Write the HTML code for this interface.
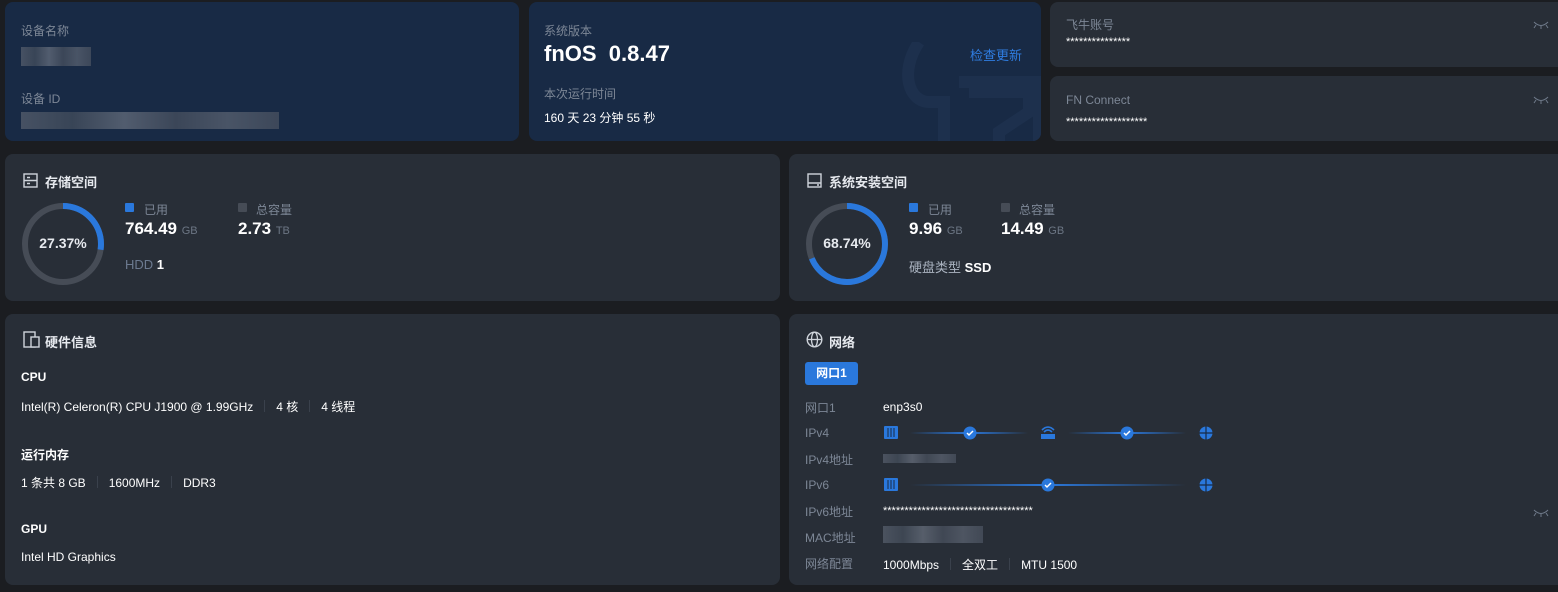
<!DOCTYPE html>
<html><head><meta charset="utf-8"><style>
*{margin:0;padding:0;box-sizing:border-box}
body{width:1558px;height:592px;background:#1b1d21;font-family:"Liberation Sans","Noto Sans CJK SC",sans-serif;color:#fff;position:relative;overflow:hidden}
.c{position:absolute;background:#282e37;border-radius:8px}
.b{background:#182a45}
.a{position:absolute;white-space:nowrap}
.lab{color:#7d8796;font-size:12px}
.v{font-size:12px;color:#fff}
.h{font-size:13px;font-weight:bold;color:#e6e9ee}
.big{font-size:17px;font-weight:bold}
.u{font-size:11px;color:#6c7684;font-weight:normal}
.sep{display:inline-block;width:1px;height:12px;background:#3a414c;margin:0 11px;vertical-align:-1px}
.blur{position:absolute;background:linear-gradient(90deg,#5a6270,#46505e,#6a7280,#4a5260,#5e6674,#4c5462);opacity:.7}
</style></head><body>
<div class="c b" style="left:5px;top:2px;width:514px;height:139px"></div>
<div class="a lab" style="left:21px;top:22px">设备名称</div>
<div class="blur" style="left:21px;top:47px;width:70px;height:19px"></div>
<div class="a lab" style="left:21px;top:90px">设备 ID</div>
<div class="blur" style="left:21px;top:112px;width:258px;height:17px"></div>

<div class="c b" style="left:529px;top:2px;width:512px;height:139px;overflow:hidden">
<svg style="position:absolute;left:370px;top:40px" width="150" height="110"><path d="M20 0 C0 30 10 60 30 60 L45 60 L45 100 M60 40 L140 40 L140 110 M70 50 L130 50 L130 70 L100 90 L100 110" stroke="#1d304d" stroke-width="12" fill="none"/></svg>
</div>
<div class="a lab" style="left:544px;top:22px">系统版本</div>
<div class="a" style="left:544px;top:41px;font-size:22px;font-weight:bold">fnOS&nbsp; 0.8.47</div>
<div class="a" style="left:970px;top:45px;font-size:13px;color:#2f7de1">检查更新</div>
<div class="a lab" style="left:544px;top:85px">本次运行时间</div>
<div class="a v" style="left:544px;top:109px">160 天 23 分钟 55 秒</div>

<div class="c" style="left:1050px;top:2px;width:520px;height:65px"></div>
<div class="a lab" style="left:1066px;top:16px">飞牛账号</div>
<div class="a v" style="left:1066px;top:36px;font-size:11px">***************</div>
<div class="c" style="left:1050px;top:76px;width:520px;height:65px"></div>
<div class="a lab" style="left:1066px;top:93px">FN Connect</div>
<div class="a v" style="left:1066px;top:116px;font-size:11px">*******************</div>
<svg class="a" style="left:1533px;top:20px" width="16" height="10"><path d="M1 2 Q8 9 15 2 M3 5 L1 8 M8 6 V9 M13 5 L15 8" stroke="#6f7a8a" fill="none"/></svg>
<svg class="a" style="left:1533px;top:95px" width="16" height="10"><path d="M1 2 Q8 9 15 2 M3 5 L1 8 M8 6 V9 M13 5 L15 8" stroke="#6f7a8a" fill="none"/></svg>

<div class="c" style="left:5px;top:154px;width:775px;height:147px"></div>
<svg class="a" style="left:23px;top:173px" width="15" height="15"><rect x="1" y="1" width="13" height="13" fill="none" stroke="#cfd4db" stroke-width="1.4"/><path d="M1 7.5H14M4 4.5H7M4 10.5H7" stroke="#cfd4db" stroke-width="1.4"/></svg>
<div class="a h" style="left:45px;top:172px">存储空间</div>
<svg class="a" style="left:20px;top:201px" width="86" height="86"><circle cx="43" cy="43" r="38" fill="none" stroke="#464c56" stroke-width="6"/><circle cx="43" cy="43" r="38" fill="none" stroke="#2a78dc" stroke-width="6" stroke-dasharray="65.3 300" transform="rotate(-90 43 43)"/></svg>
<div class="a" style="left:20px;top:235px;width:86px;text-align:center;font-size:14px;font-weight:bold;color:#e6e9ee">27.37%</div>
<div class="a" style="left:125px;top:203px;width:9px;height:9px;background:#2a78dc;border-radius:1px"></div>
<div class="a lab" style="left:144px;top:201px">已用</div>
<div class="a big" style="left:125px;top:219px">764.49 <span class="u">GB</span></div>
<div class="a" style="left:238px;top:203px;width:9px;height:9px;background:#464c56;border-radius:1px"></div>
<div class="a lab" style="left:256px;top:201px">总容量</div>
<div class="a big" style="left:238px;top:219px">2.73 <span class="u">TB</span></div>
<div class="a" style="left:125px;top:257px;font-size:13px;color:#6c7a90">HDD <b style="color:#fff">1</b></div>

<div class="c" style="left:789px;top:154px;width:780px;height:147px"></div>
<svg class="a" style="left:807px;top:173px" width="15" height="15"><rect x="1" y="1" width="13" height="13" fill="none" stroke="#cfd4db" stroke-width="1.4"/><path d="M1 10H14M10 12H12" stroke="#cfd4db" stroke-width="1.4"/></svg>
<div class="a h" style="left:829px;top:172px">系统安装空间</div>
<svg class="a" style="left:804px;top:201px" width="86" height="86"><circle cx="43" cy="43" r="38" fill="none" stroke="#464c56" stroke-width="6"/><circle cx="43" cy="43" r="38" fill="none" stroke="#2a78dc" stroke-width="6" stroke-dasharray="164.1 300" transform="rotate(-90 43 43)"/></svg>
<div class="a" style="left:804px;top:235px;width:86px;text-align:center;font-size:14px;font-weight:bold;color:#e6e9ee">68.74%</div>
<div class="a" style="left:909px;top:203px;width:9px;height:9px;background:#2a78dc;border-radius:1px"></div>
<div class="a lab" style="left:928px;top:201px">已用</div>
<div class="a big" style="left:909px;top:219px">9.96 <span class="u">GB</span></div>
<div class="a" style="left:1001px;top:203px;width:9px;height:9px;background:#464c56;border-radius:1px"></div>
<div class="a lab" style="left:1019px;top:201px">总容量</div>
<div class="a big" style="left:1001px;top:219px">14.49 <span class="u">GB</span></div>
<div class="a" style="left:909px;top:257px;font-size:13px;color:#aab3c0">硬盘类型 <b style="color:#fff">SSD</b></div>

<div class="c" style="left:5px;top:314px;width:775px;height:271px"></div>
<svg class="a" style="left:23px;top:331px" width="17" height="17"><rect x="1" y="1" width="11" height="15" fill="none" stroke="#cfd4db" stroke-width="1.4"/><rect x="8" y="6" width="8" height="10" fill="#282e37" stroke="#cfd4db" stroke-width="1.4"/></svg>
<div class="a h" style="left:45px;top:332px">硬件信息</div>
<div class="a" style="left:21px;top:370px;font-size:12px;font-weight:bold">CPU</div>
<div class="a v" style="left:21px;top:398px">Intel(R) Celeron(R) CPU J1900 @ 1.99GHz<span class="sep"></span>4 核<span class="sep"></span>4 线程</div>
<div class="a" style="left:21px;top:446px;font-size:12px;font-weight:bold">运行内存</div>
<div class="a v" style="left:21px;top:474px">1 条共 8 GB<span class="sep"></span>1600MHz<span class="sep"></span>DDR3</div>
<div class="a" style="left:21px;top:522px;font-size:12px;font-weight:bold">GPU</div>
<div class="a v" style="left:21px;top:550px">Intel HD Graphics</div>

<div class="c" style="left:789px;top:314px;width:780px;height:271px"></div>
<svg class="a" style="left:806px;top:331px" width="17" height="17"><circle cx="8.5" cy="8.5" r="7.3" fill="none" stroke="#cfd4db" stroke-width="1.4"/><ellipse cx="8.5" cy="8.5" rx="3" ry="7.3" fill="none" stroke="#cfd4db" stroke-width="1.3"/><path d="M1.2 8.5H15.8" stroke="#cfd4db" stroke-width="1.3"/></svg>
<div class="a h" style="left:829px;top:332px">网络</div>
<div class="a" style="left:805px;top:362px;width:53px;height:23px;background:#2a78dc;border-radius:3px;font-size:12px;font-weight:bold;text-align:center;line-height:23px">网口1</div>
<div class="a lab" style="left:805px;top:399px">网口1</div><div class="a v" style="left:883px;top:400px">enp3s0</div>
<div class="a lab" style="left:805px;top:426px">IPv4</div>
<div class="a lab" style="left:805px;top:451px">IPv4地址</div><div class="blur" style="left:883px;top:454px;width:73px;height:9px"></div>
<div class="a lab" style="left:805px;top:478px">IPv6</div>
<div class="a lab" style="left:805px;top:503px">IPv6地址</div><div class="a v" style="left:883px;top:505px;font-size:11px">***********************************</div>
<div class="a lab" style="left:805px;top:529px">MAC地址</div><div class="blur" style="left:883px;top:526px;width:100px;height:17px"></div>
<div class="a lab" style="left:805px;top:555px">网络配置</div><div class="a v" style="left:883px;top:556px">1000Mbps<span class="sep"></span>全双工<span class="sep"></span>MTU 1500</div>
<svg class="a" style="left:1533px;top:508px" width="16" height="10"><path d="M1 2 Q8 9 15 2 M3 5 L1 8 M8 6 V9 M13 5 L15 8" stroke="#6f7a8a" fill="none"/></svg>
<svg class="a" style="left:880px;top:422px" width="340" height="70">
<defs><linearGradient id="g1"><stop offset="0" stop-color="#2a78dc" stop-opacity="0"/><stop offset=".5" stop-color="#2a78dc"/><stop offset="1" stop-color="#2a78dc" stop-opacity="0"/></linearGradient></defs>
<rect x="4" y="4" width="14" height="13" rx="1" fill="#2a78dc"/><path d="M8 6V15M11 6V15M14 6V15" stroke="#182a45" stroke-width="1"/>
<rect x="30" y="10" width="118" height="2" fill="url(#g1)"/>
<circle cx="90" cy="11" r="6.5" fill="#2a78dc"/><path d="M87 11L89 13L93 9" stroke="#fff" stroke-width="1.5" fill="none"/>
<path d="M162 8 Q168 2 174 8 M164 10 Q168 6 172 10" stroke="#2a78dc" stroke-width="1.6" fill="none"/><rect x="161" y="12" width="14" height="5" fill="#2a78dc"/>
<rect x="188" y="10" width="118" height="2" fill="url(#g1)"/>
<circle cx="247" cy="11" r="6.5" fill="#2a78dc"/><path d="M244 11L246 13L250 9" stroke="#fff" stroke-width="1.5" fill="none"/>
<circle cx="326" cy="11" r="6.5" fill="#2a78dc"/><path d="M319.5 11H332.5M326 4.5V17.5" stroke="#182a45" stroke-width="1.2"/>
<g transform="translate(0,52)"><rect x="4" y="4" width="14" height="13" rx="1" fill="#2a78dc"/><path d="M8 6V15M11 6V15M14 6V15" stroke="#182a45" stroke-width="1"/>
<rect x="30" y="10" width="276" height="2" fill="url(#g1)"/>
<circle cx="168" cy="11" r="6.5" fill="#2a78dc"/><path d="M165 11L167 13L171 9" stroke="#fff" stroke-width="1.5" fill="none"/>
<circle cx="326" cy="11" r="6.5" fill="#2a78dc"/><path d="M319.5 11H332.5M326 4.5V17.5" stroke="#182a45" stroke-width="1.2"/></g>
</svg>
</body></html>
